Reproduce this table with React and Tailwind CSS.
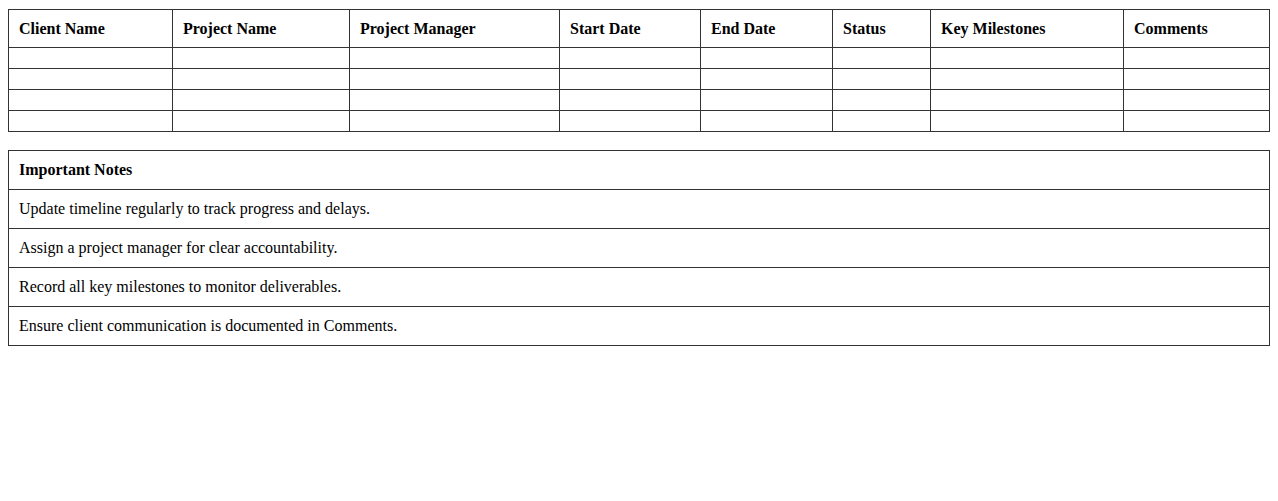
import React from "react";

const headers = [
  "Client Name",
  "Project Name",
  "Project Manager",
  "Start Date",
  "End Date",
  "Status",
  "Key Milestones",
  "Comments",
];

const notes = [
  "Update timeline regularly to track progress and delays.",
  "Assign a project manager for clear accountability.",
  "Record all key milestones to monitor deliverables.",
  "Ensure client communication is documented in Comments.",
];

export default function App() {
  return (
    <div
      className="min-h-[501px] bg-white px-2 pt-[9px] text-[16px] text-black"
      style={{ fontFamily: '"Liberation Serif", "Times New Roman", serif' }}
    >
      <div className="grid grid-cols-[164px_177px_210px_141px_132px_98px_193px_146px] border-r border-b border-[#333]">
        {headers.map((h) => (
          <div
            key={h}
            className="flex h-[38px] items-center border-l border-t border-[#333] pl-[10px] font-bold"
          >
            {h}
          </div>
        ))}
        {[0, 1, 2, 3].map((r) =>
          headers.map((h) => (
            <div
              key={`${r}-${h}`}
              className="h-[21px] border-l border-t border-[#333]"
            />
          ))
        )}
      </div>

      <div className="mt-[18px] flex flex-col border-r border-b border-[#333]">
        <div className="flex h-[39px] items-center border-l border-t border-[#333] pl-[10px] font-bold">
          Important Notes
        </div>
        {notes.map((n) => (
          <div
            key={n}
            className="flex h-[39px] items-center border-l border-t border-[#333] pl-[10px]"
          >
            {n}
          </div>
        ))}
      </div>
    </div>
  );
}
